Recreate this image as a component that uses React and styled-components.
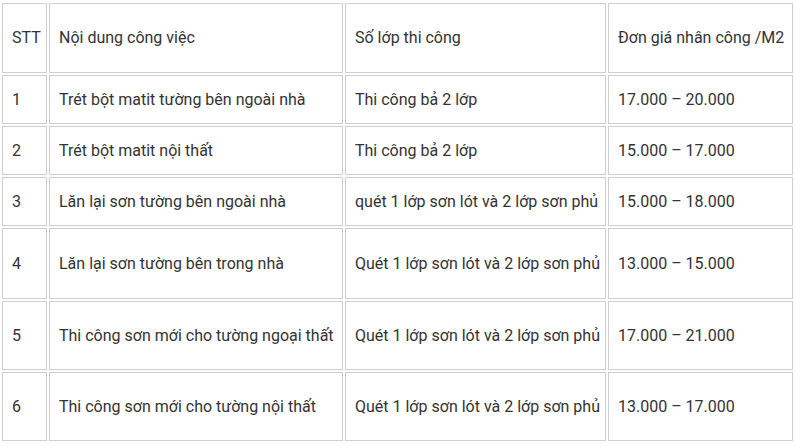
import React from 'react';
import styled, { createGlobalStyle } from 'styled-components';

const GlobalStyle = createGlobalStyle`
	html, body {
		margin: 0;
		padding: 0;
		background: #fff;
	}
	body {
		font-family: Roboto, "Noto Sans", "Liberation Sans", sans-serif;
		color: #333;
	}
`

const PriceTable = styled.table`
	width: 795px;
	margin-top: 1px;
	table-layout: fixed;
	border-collapse: separate;
	border-spacing: 2px;
	font-size: 16px;
`

const Row = styled.tr`
	height: ${props => props.$h}px;
`

const Cell = styled.td`
	box-sizing: border-box;
	border: 1px solid #cfcfcf;
	padding: 0 8px 0 9px;
	vertical-align: middle;
	text-align: left;
	font-weight: 400;
	white-space: nowrap;
	color: #333;
	line-height: 1.2;
`

const COLS = [45, 294, 261, 185];

const header = ['STT', 'Nội dung công việc', 'Số lớp thi công', 'Đơn giá nhân công /M2'];

const rows = [
	{ h: 49, cells: ['1', 'Trét bột matit tường bên ngoài nhà', 'Thi công bả 2 lớp', '17.000 – 20.000'] },
	{ h: 49, cells: ['2', 'Trét bột matit nội thất', 'Thi công bả 2 lớp', '15.000 – 17.000'] },
	{ h: 49, cells: ['3', 'Lăn lại sơn tường bên ngoài nhà', 'quét 1 lớp sơn lót và 2 lớp sơn phủ', '15.000 – 18.000'] },
	{ h: 71, cells: ['4', 'Lăn lại sơn tường bên trong nhà', 'Quét 1 lớp sơn lót và 2 lớp sơn phủ', '13.000 – 15.000'] },
	{ h: 69, cells: ['5', 'Thi công sơn mới cho tường ngoại thất', 'Quét 1 lớp sơn lót và 2 lớp sơn phủ', '17.000 – 21.000'] },
	{ h: 69, cells: ['6', 'Thi công sơn mới cho tường nội thất', 'Quét 1 lớp sơn lót và 2 lớp sơn phủ', '13.000 – 17.000'] },
];

function App() {
	return (
		<>
			<GlobalStyle />
			<PriceTable>
				<colgroup>
					{COLS.map((w, i) => <col key={i} style={{ width: w }} />)}
				</colgroup>
				<tbody>
					<Row $h={70}>
						{header.map((t, i) => <Cell key={i}>{t}</Cell>)}
					</Row>
					{rows.map((r, i) => (
						<Row key={i} $h={r.h}>
							{r.cells.map((t, j) => <Cell key={j}>{t}</Cell>)}
						</Row>
					))}
				</tbody>
			</PriceTable>
		</>
	);
}

export default App;
